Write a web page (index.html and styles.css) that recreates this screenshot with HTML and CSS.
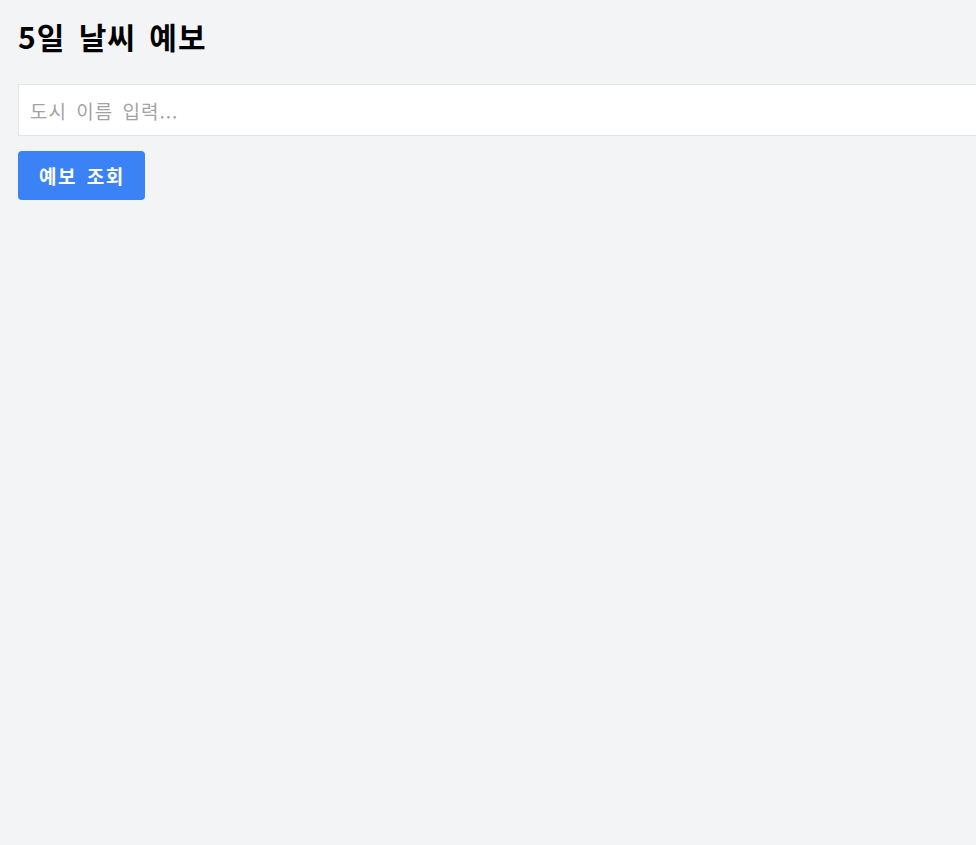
FILE: index.html
```html
<!DOCTYPE html>
<html lang="ko">
<head>
<meta charset="utf-8">
<title>5일 날씨 예보</title>
<link rel="stylesheet" href="styles.css">
</head>
<body>
<main class="app">
  <h1 class="title">5일 날씨 예보</h1>
  <input class="city-input" type="text" placeholder="도시 이름 입력...">
  <button class="search-btn" type="button">예보 조회</button>
</main>
</body>
</html>
```
FILE: styles.css
```css
html, body {
  margin: 0;
  padding: 0;
  overflow: hidden;
}
body {
  background: #f3f4f6;
  font-family: "Noto Sans CJK KR", "Noto Sans", sans-serif;
  color: #000;
}
.app {
  padding: 18px;
  display: flex;
  flex-direction: column;
  align-items: flex-start;
}
.title {
  margin: 0;
  font-size: 30px;
  font-weight: 700;
  line-height: 36px;
  letter-spacing: 1px;
  word-spacing: 4px;
}
.city-input {
  box-sizing: content-box;
  flex: none;
  margin-top: 30px;
  width: 100%;
  height: 50px;
  padding: 0 11px;
  border: 1px solid #e2e4e8;
  background: #fff;
  font-family: inherit;
  font-size: 19px;
  letter-spacing: 1px;
  word-spacing: 3px;
  color: #111;
  outline: none;
}
.city-input::placeholder {
  color: #a3a3a3;
}
.search-btn {
  box-sizing: border-box;
  margin-top: 15px;
  height: 49px;
  padding: 0 20px 0 21px;
  border: none;
  border-radius: 4px;
  background: #3b82f6;
  color: #fff;
  font-family: inherit;
  font-size: 19px;
  font-weight: 700;
  letter-spacing: 1.5px;
  word-spacing: 3px;
}
```
